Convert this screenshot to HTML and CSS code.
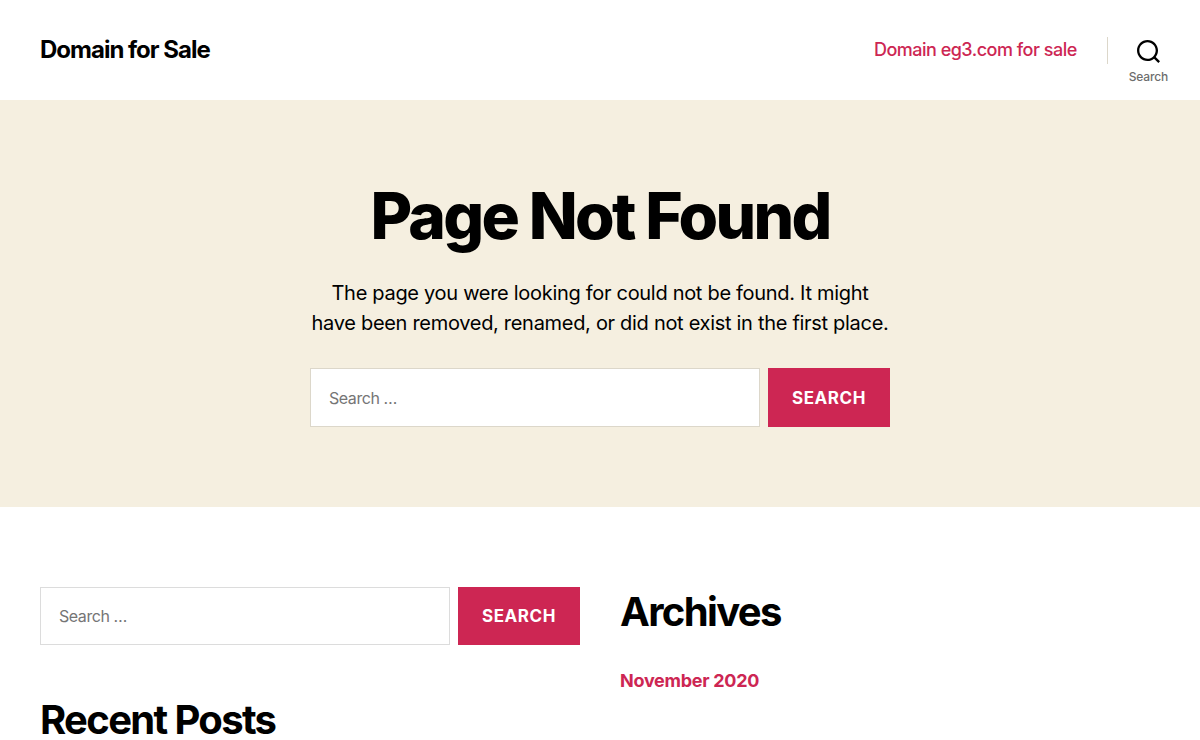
FILE: index.html
```html
<!DOCTYPE html>
<html lang="en-US">

<head>
    <meta charset="UTF-8">
    <meta name="viewport" content="width=device-width, initial-scale=1.0">
    <title>Page not found - Domain for Sale</title>
    <link rel="stylesheet" href="styles.css">
</head>

<body>
    <header class="site-header">
        <a class="site-title" href="#">Domain for Sale</a>
        <div class="header-navigation">
            <nav class="primary-menu">
                <a href="#">Domain eg3.com for sale</a>
            </nav>
            <div class="toggle-wrapper">
                <button class="search-toggle" type="button">
                    <svg class="search-icon" width="23" height="23" viewBox="0 0 23 23" aria-hidden="true">
                        <path d="M38.710696,48.0601792 L43,52.3494831 L41.3494831,54 L37.0601792,49.710696 C35.2632422,51.1481185 32.9839107,52.0076499 30.5038249,52.0076499 C24.7027226,52.0076499 20,47.3049272 20,41.5038249 C20,35.7027226 24.7027226,31 30.5038249,31 C36.3049272,31 41.0076499,35.7027226 41.0076499,41.5038249 C41.0076499,43.9839107 40.1481185,46.2632422 38.710696,48.0601792 Z M36.3875844,47.1716785 C37.8030221,45.7026647 38.6734666,43.7048964 38.6734666,41.5038249 C38.6734666,36.9918565 35.0157934,33.3341833 30.5038249,33.3341833 C25.9918565,33.3341833 22.3341833,36.9918565 22.3341833,41.5038249 C22.3341833,46.0157934 25.9918565,49.6734666 30.5038249,49.6734666 C32.7048964,49.6734666 34.7026647,48.8030221 36.1716785,47.3875844 C36.2023931,47.347638 36.2360451,47.3092237 36.2726343,47.2726343 C36.3092237,47.2360451 36.347638,47.2023931 36.3875844,47.1716785 Z" transform="translate(-20 -31)"/>
                    </svg>
                    <span>Search</span>
                </button>
            </div>
        </div>
    </header>

    <main class="error-page">
        <div class="error-content">
            <h1>Page Not Found</h1>
            <p>The page you were looking for could not be found. It might have been removed, renamed, or did not exist in the first place.</p>
            <form class="search-form">
                <input type="search" placeholder="Search …" aria-label="Search for">
                <button type="submit">Search</button>
            </form>
        </div>
    </main>

    <footer class="footer-widgets">
        <div class="column">
            <form class="search-form">
                <input type="search" placeholder="Search …" aria-label="Search for">
                <button type="submit">Search</button>
            </form>
            <h2>Recent Posts</h2>
        </div>
        <div class="column">
            <h2>Archives</h2>
            <ul class="archive-list">
                <li><a href="#">November 2020</a></li>
            </ul>
        </div>
    </footer>
</body>

</html>
```
FILE: styles.css
```css
* {
    box-sizing: border-box;
}

body {
    margin: 0;
    background: #fff;
    color: #000;
    font-family: Inter, "Liberation Sans", sans-serif;
    font-size: 18px;
    letter-spacing: -0.015em;
}

a {
    color: #cd2653;
    text-decoration: none;
}

h1,
h2,
p {
    margin: 0;
}

h1,
h2,
.site-title {
    letter-spacing: -0.0415em;
}

button,
input {
    font-family: inherit;
    border-radius: 0;
}

.site-header {
    display: flex;
    align-items: stretch;
    justify-content: space-between;
    padding-left: 40px;
}

.site-title {
    padding: 35px 0;
    color: #000;
    font-size: 24px;
    font-weight: 700;
    line-height: 30px;
}

.header-navigation {
    display: flex;
}

.primary-menu {
    padding: 36px 30px 36px 0;
    font-weight: 500;
    line-height: 27px;
    letter-spacing: -0.0277em;
}

.toggle-wrapper {
    display: flex;
    align-items: center;
}

.toggle-wrapper::before {
    content: "";
    width: 1px;
    height: 27px;
    background: #dcd7ca;
}

.search-toggle {
    display: flex;
    flex-direction: column;
    align-items: center;
    align-self: stretch;
    gap: 6px;
    padding: 40px 32px 15px 21px;
    border: 0;
    background: none;
    color: #6d6d6d;
    font-size: 12px;
    font-weight: 500;
    letter-spacing: -0.015em;
    cursor: pointer;
}

.search-icon {
    fill: #000;
}

.error-page {
    padding: 80px 20px;
    background: #f5efe0;
}

.error-content {
    max-width: 580px;
    margin: 0 auto;
    text-align: center;
}

h1 {
    font-size: 64px;
    font-weight: 800;
    line-height: 72px;
}

.error-content p {
    margin: 26px 0 30px;
    font-size: 20px;
    line-height: 30px;
    letter-spacing: -0.015em;
}

.search-form {
    display: flex;
    gap: 8px;
}

.search-form input {
    flex: 1;
    min-width: 0;
    height: 59px;
    padding: 0 18px;
    border: 1px solid #dcd7ca;
    background: #fff;
    font-size: 16px;
    letter-spacing: -0.0277em;
}

.footer-widgets .search-form input {
    height: 58px;
    border-color: #dcdcdc;
}

.search-form button {
    padding: 0 24px;
    border: 0;
    background: #cd2653;
    color: #fff;
    font-size: 17px;
    font-weight: 700;
    letter-spacing: 0.0333em;
    text-transform: uppercase;
    cursor: pointer;
}

.footer-widgets {
    display: grid;
    grid-template-columns: 1fr 1fr;
    gap: 40px;
    padding: 80px 40px 0;
}

h2 {
    font-size: 40px;
    font-weight: 700;
    line-height: 50px;
}

.column .search-form {
    margin-bottom: 50px;
}

.archive-list {
    margin: 30px 0 0;
    padding: 0;
    list-style: none;
    font-weight: 700;
    line-height: 27px;
}
```
